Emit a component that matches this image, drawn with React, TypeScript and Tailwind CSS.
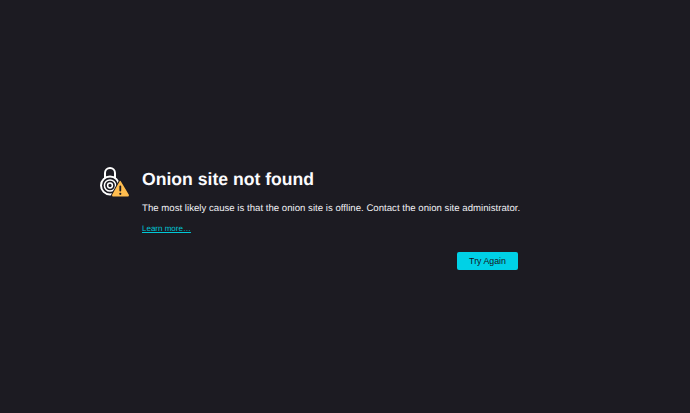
export default function App() {
  return (
    <div className="min-h-screen bg-[#1c1b22] font-['Liberation_Sans',Arial,sans-serif] [text-rendering:geometricPrecision] pt-[167px] pl-[100px]">
      <div className="flex w-[418px] gap-[13px]">
        <svg width="29" height="30" viewBox="0 0 29 30" fill="none" className="shrink-0">
          {/* padlock shackle */}
          <path d="M5 11V6a5 5 0 0 1 10 0V11" stroke="#fff" strokeWidth="2" />
          {/* onion rings */}
          <circle cx="10" cy="18.500" r="9" stroke="#fff" strokeWidth="2" />
          <circle cx="10" cy="18.500" r="5.600" stroke="#fff" strokeWidth="1.500" />
          <circle cx="10" cy="18.500" r="2.400" stroke="#fff" strokeWidth="1.500" />
          {/* warning badge */}
          <path d="M20.800 14.300 28.700 27.600a1.300 1.300 0 0 1-1.100 2H13.400a1.300 1.300 0 0 1-1.100-2L19.600 14.300a.7.7 0 0 1 1.200 0Z" fill="#ffbd4f" stroke="#1c1b22" strokeWidth="2" paintOrder="stroke" strokeLinejoin="round" />
          <rect x="19.400" y="18.500" width="1.800" height="6" rx=".9" fill="#1c1b22" />
          <circle cx="20.300" cy="26.800" r="1.100" fill="#1c1b22" />
        </svg>
        <div className="flex-1 min-w-0">
          <h1 className="text-[17.6px] leading-[22px] font-bold text-[#fbfbfe] pt-[1px]">Onion site not found</h1>
          <p className="mt-[13px] text-[9.6px] leading-[12px] tracking-[0.02px] text-[#f0f0f4] whitespace-nowrap">
            The most likely cause is that the onion site is offline. Contact the onion site administrator.
          </p>
          <a className="mt-[9px] block text-[8px] leading-[10px] text-[#00c8d7] underline">Learn more…</a>
          <div className="mt-[18px] flex justify-end">
            <button className="h-[18px] w-[61px] rounded-[2px] bg-[#00d1e6] pt-[1px] text-[8.8px] text-[#15141a]">Try Again</button>
          </div>
        </div>
      </div>
    </div>
  );
}
